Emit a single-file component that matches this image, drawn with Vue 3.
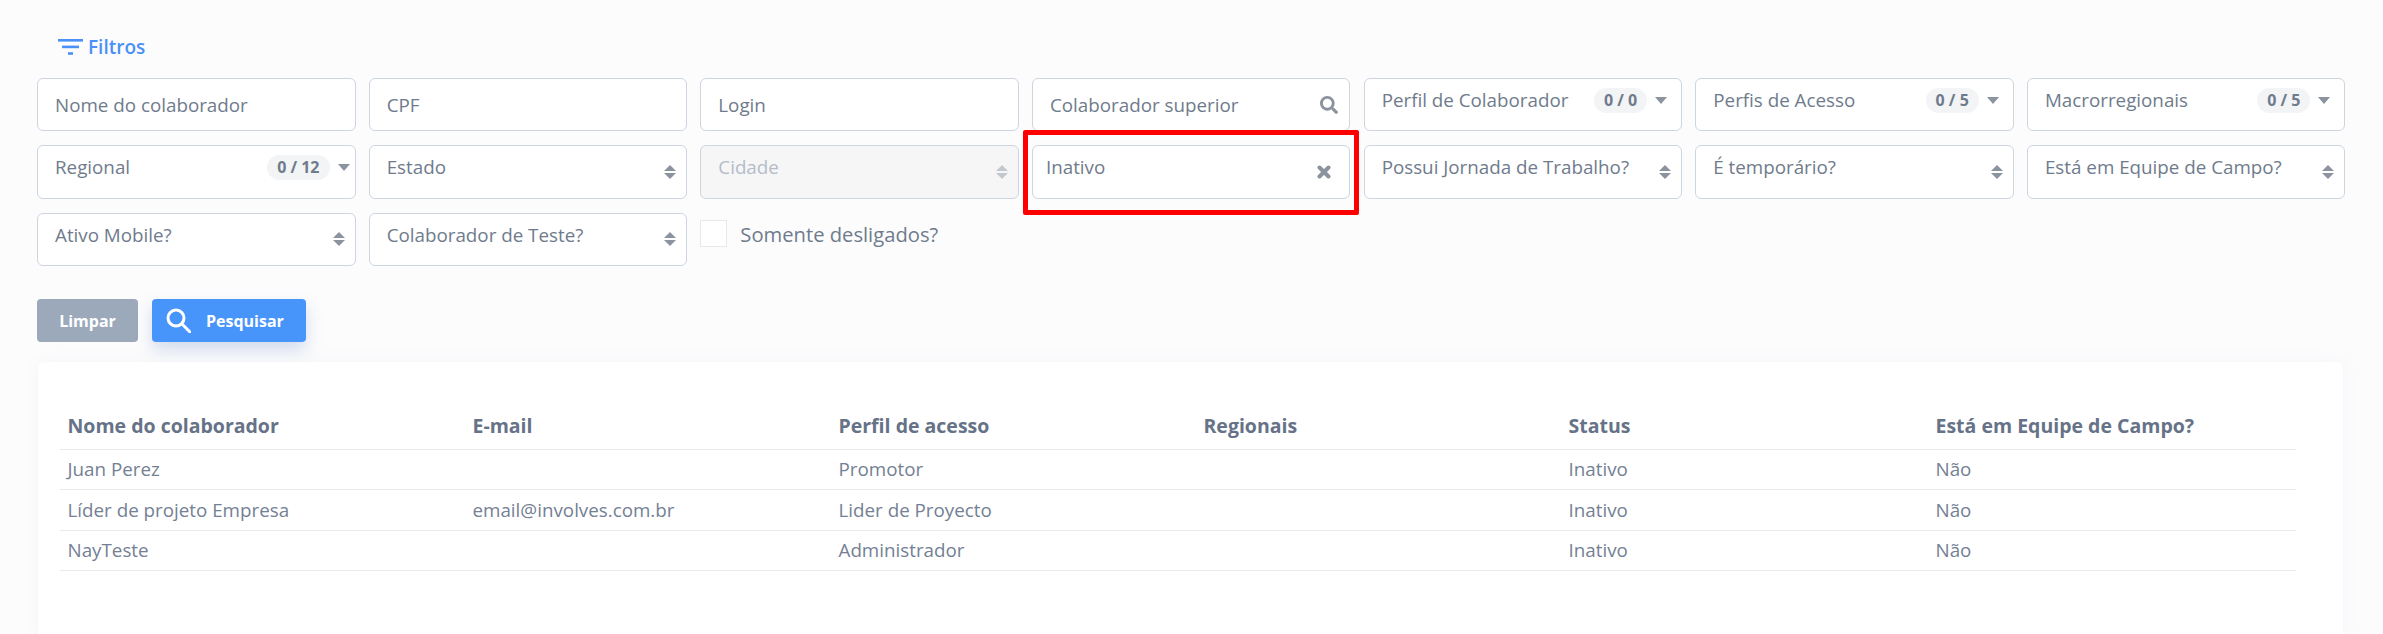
<script setup>
const fields = [
  { label: "Nome do colaborador", type: "text" },
  { label: "CPF", type: "text" },
  { label: "Login", type: "text" },
  { label: "Colaborador superior", type: "search" },
  { label: "Perfil de Colaborador", type: "multi", count: "0 / 0" },
  { label: "Perfis de Acesso", type: "multi", count: "0 / 5" },
  { label: "Macrorregionais", type: "multi", count: "0 / 5" },
  { label: "Regional", type: "multi", count: "0 / 12", tight: true },
  { label: "Estado", type: "select" },
  { label: "Cidade", type: "select", disabled: true },
  { label: "Inativo", type: "clear", marked: true },
  { label: "Possui Jornada de Trabalho?", type: "select" },
  { label: "É temporário?", type: "select" },
  { label: "Está em Equipe de Campo?", type: "select" },
  { label: "Ativo Mobile?", type: "select" },
  { label: "Colaborador de Teste?", type: "select" },
];

const columns = [
  "Nome do colaborador",
  "E-mail",
  "Perfil de acesso",
  "Regionais",
  "Status",
  "Está em Equipe de Campo?",
];

const rows = [
  ["Juan Perez", "", "Promotor", "", "Inativo", "Não"],
  ["Líder de projeto Empresa", "email@involves.com.br", "Lider de Proyecto", "", "Inativo", "Não"],
  ["NayTeste", "", "Administrador", "", "Inativo", "Não"],
];
</script>

<template>
  <div class="page">
    <div class="filter-title">
      <svg class="filter-icon" viewBox="0 0 25 16" width="25" height="16">
        <rect x="0" y="0" width="25" height="2.6" fill="#4a90f7" />
        <rect x="4" y="6.6" width="17" height="2.6" fill="#4a90f7" />
        <rect x="10" y="13.2" width="5" height="2.6" fill="#4a90f7" />
      </svg>
      <span>Filtros</span>
    </div>

    <div class="filters">
      <div
        v-for="f in fields"
        :key="f.label"
        class="field"
        :class="[f.type, { disabled: f.disabled, marked: f.marked, tight: f.tight }]"
      >
        <span class="label">{{ f.label }}</span>

        <template v-if="f.type === 'multi'">
          <span class="count">{{ f.count }}</span>
          <span class="caret"></span>
        </template>

        <span v-else-if="f.type === 'select'" class="updown">
          <i class="up"></i>
          <i class="down"></i>
        </span>

        <svg v-else-if="f.type === 'search'" class="search-icon" viewBox="0 0 512 512" width="18" height="18">
          <path
            fill="#8b939e"
            d="M505 442.7L405.3 343c-4.5-4.5-10.6-7-17-7H372c27.6-35.3 44-79.7 44-128C416 93.1 322.9 0 208 0S0 93.1 0 208s93.1 208 208 208c48.3 0 92.7-16.4 128-44v16.3c0 6.4 2.5 12.5 7 17l99.7 99.7c9.4 9.4 24.6 9.4 33.9 0l28.3-28.3c9.4-9.4 9.4-24.6.1-34zM208 336c-70.7 0-128-57.2-128-128 0-70.7 57.2-128 128-128 70.7 0 128 57.2 128 128 0 70.7-57.2 128-128 128z"
          />
        </svg>

        <svg v-else-if="f.type === 'clear'" class="clear-icon" viewBox="0 0 14 14" width="14" height="14">
          <path d="M2.5 2.5L11.5 11.5M11.5 2.5L2.5 11.5" fill="none" stroke="#8b939e" stroke-width="4" stroke-linecap="round" />
        </svg>

        <span v-if="f.marked" class="red-box"></span>
      </div>

      <label class="check">
        <span class="box"></span>
        <span>Somente desligados?</span>
      </label>
    </div>

    <div class="actions">
      <button class="btn clear-btn">Limpar</button>
      <button class="btn search-btn">
        <svg viewBox="0 0 25 25" width="25" height="25" fill="none" stroke="#fff" stroke-width="3">
          <circle cx="10" cy="10" r="8" />
          <path d="M15.8 15.8L24 24" stroke-linecap="round" />
        </svg>
        <span>Pesquisar</span>
      </button>
    </div>

    <div class="card">
      <table>
        <colgroup>
          <col style="width: 405px" />
          <col style="width: 366px" />
          <col style="width: 365px" />
          <col style="width: 365px" />
          <col style="width: 367px" />
          <col style="width: 368px" />
        </colgroup>
        <thead>
          <tr>
            <th v-for="c in columns" :key="c">{{ c }}</th>
          </tr>
        </thead>
        <tbody>
          <tr v-for="(r, i) in rows" :key="i">
            <td v-for="(v, j) in r" :key="j">{{ v }}</td>
          </tr>
        </tbody>
      </table>
    </div>
  </div>
</template>

<style>
html,
body {
  margin: 0;
  background: #fcfcfd;
}
</style>

<style scoped>
.page {
  box-sizing: border-box;
  height: 634px;
  overflow: hidden;
  display: flex;
  flex-direction: column;
  padding: 0 38px 0 37px;
  font-family: "Open Sans", sans-serif;
  background: #fcfcfd;
  color: #6b7789;
}

.filter-title {
  display: flex;
  align-items: center;
  gap: 5px;
  height: 24px;
  margin-top: 35px;
  margin-left: 21px;
  font-size: 19px;
  font-weight: 600;
  color: #4a90f7;
}

.filters {
  display: grid;
  grid-template-columns: repeat(7, 318.5px);
  grid-auto-rows: 53.4px;
  column-gap: 13.17px;
  row-gap: 14px;
  margin-top: 19px;
}

.field {
  position: relative;
  box-sizing: border-box;
  display: flex;
  align-items: flex-start;
  padding: 9px 0 0 17px;
  background: #fff;
  border: 1.5px solid #cdd5e1;
  border-radius: 6px;
  font-size: 18.8px;
  line-height: 24px;
  color: #6f7b8c;
}

.field.text,
.field.search {
  align-items: center;
  padding-top: 0;
}

.field.clear {
  padding-left: 13px;
}

.field.disabled {
  background: #f6f6f7;
  color: #b5bcc7;
}

.label {
  flex: 1;
  white-space: nowrap;
}

.count {
  height: 25px;
  margin: 0 8px 0 0;
  padding: 0 10px;
  background: #f3f4f6;
  border-radius: 13px;
  font-size: 16px;
  font-weight: 700;
  line-height: 25px;
}

.caret {
  width: 0;
  height: 0;
  margin: 9px 14px 0 0;
  border-left: 6px solid transparent;
  border-right: 6px solid transparent;
  border-top: 7px solid #8b939e;
}

.tight .caret {
  margin-right: 5px;
}

.updown {
  position: absolute;
  right: 10px;
  top: 50%;
  transform: translateY(-50%);
  display: flex;
  flex-direction: column;
  gap: 2px;
}

.updown i {
  display: block;
  width: 0;
  height: 0;
  border-left: 6px solid transparent;
  border-right: 6px solid transparent;
}

.updown .up {
  border-bottom: 6.5px solid #8b939e;
}

.updown .down {
  border-top: 6.5px solid #8b939e;
}

.disabled .updown .up {
  border-bottom-color: #c3c8d0;
}

.disabled .updown .down {
  border-top-color: #c3c8d0;
}

.search-icon {
  margin-right: 11px;
}

.clear-icon {
  position: absolute;
  right: 18px;
  top: 50%;
  transform: translateY(-50%);
}

.red-box {
  position: absolute;
  top: -16px;
  right: -10px;
  bottom: -17px;
  left: -10px;
  border: 5px solid #fe0000;
  border-radius: 2px;
  pointer-events: none;
}

.check {
  display: flex;
  align-items: flex-start;
  gap: 13px;
  padding-top: 7px;
  font-size: 20.2px;
  line-height: 28px;
  color: #6f7b8c;
}

.box {
  box-sizing: border-box;
  width: 27px;
  height: 27px;
  background: #fff;
  border: 1.5px solid #e6e8ec;
}

.actions {
  display: flex;
  gap: 14px;
  margin-top: 33px;
}

.btn {
  height: 43px;
  border: none;
  border-radius: 4px;
  font-family: inherit;
  font-size: 16px;
  font-weight: 700;
  color: #fff;
}

.clear-btn {
  width: 101px;
  background: #9ca9bb;
}

.search-btn {
  display: flex;
  align-items: center;
  width: 154px;
  padding: 0 0 0 14px;
  background: #4794fb;
  box-shadow: 0 8px 16px rgba(86, 122, 190, 0.25);
}

.search-btn span {
  margin-left: 15px;
}

.card {
  flex: 1;
  margin: 20px 2px 0 1px;
  padding: 31.5px 0 0 22px;
  background: #fff;
  border-radius: 6px 6px 0 0;
  box-shadow: 0 0 16px rgba(120, 130, 150, 0.06);
}

table {
  width: 2236px;
  table-layout: fixed;
  border-collapse: collapse;
}

th,
td {
  padding: 0 0 0 7.5px;
  text-align: left;
  white-space: nowrap;
  border-bottom: 1.5px solid #e8e9ec;
}

th {
  height: 45px;
  padding-bottom: 10px;
  vertical-align: bottom;
  font-size: 19.5px;
  font-weight: 700;
  line-height: 27px;
  color: #667287;
}

td {
  height: 39.5px;
  font-size: 18.8px;
  font-weight: 400;
  color: #748094;
}
</style>
